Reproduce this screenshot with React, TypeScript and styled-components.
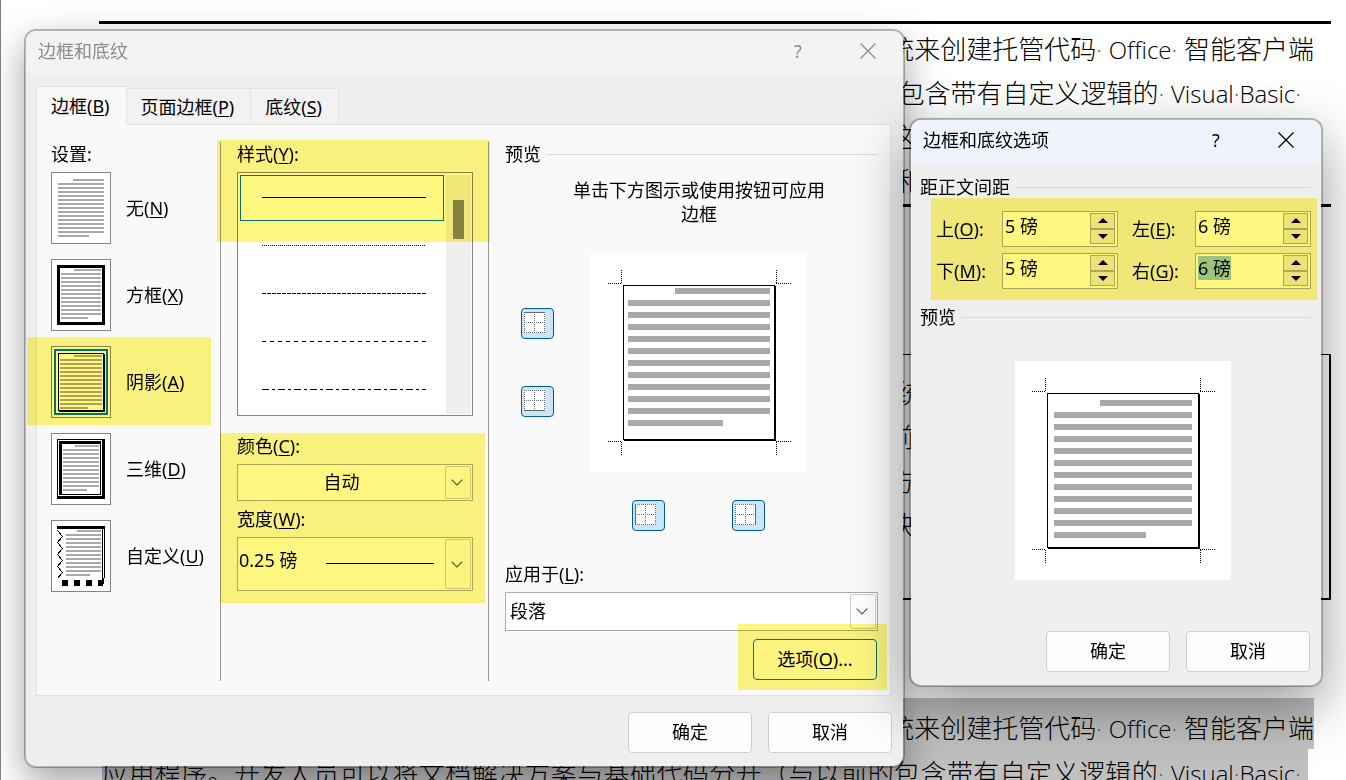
import React, { useEffect, useRef } from 'react';
import styled, { createGlobalStyle, css } from 'styled-components';

const GlobalStyle = createGlobalStyle`
  *, *::before, *::after { box-sizing: border-box; }
  body { margin: 0; background: #fff; }
  body, button, input, select {
    font-family: "Noto Sans", "Noto Sans CJK SC", sans-serif;
    font-size: 18px;
    line-height: 24px;
    font-weight: 400;
    color: #000;
  }
`;

/* ---------- document behind the dialogs ---------- */

const Desktop = styled.main`
  position: relative;
  height: 100vh;
  overflow: hidden;
  border-left: 1px solid #7f7f7f;
  padding: 21px 15px 0 98px;
`;

const docText = css`
  font-family: "Open Sans", "Noto Sans CJK SC", sans-serif;
  font-weight: 300;
  font-size: 26px;
  line-height: 44px;
  white-space: nowrap;
`;

const RuledBlock = styled.section`
  ${docText}
  border-top: 3px solid #000;
  border-bottom: 3px solid #000;
  padding: 3px 17px 1px 3px;
`;

const BoxedBlock = styled.section`
  ${docText}
  margin-top: 147px;
  border: 1px solid #000;
  border-right-width: 2px;
  border-bottom-width: 2px;
  padding: 16px 15px 51px 3px;
`;

const SelectedBlock = styled.section`
  ${docText}
  margin: 98px 17px 0 3px;
`;

const Line = styled.p<{ $inset?: number }>`
  margin: 0;
  text-align: right;
  padding-right: ${(p) => p.$inset ?? 0}px;
`;

const SelectedFirst = styled(Line)`
  background: #c0c0c0;
  padding-top: 10px;
  padding-bottom: 1px;
  line-height: 40px;
`;

const SelectedSecond = styled(Line)`
  background: #c0c0c0;
  margin-right: 6px;
  line-height: 48px;
  text-align: justify;
  text-align-last: justify;
`;

const Latin = styled.span`
  font-size: 24px;
  line-height: 1;
  font-variant-ligatures: none;
`;

const Dot = styled.span`
  font-size: 24px;
  line-height: 1;
  color: #666;
`;

/* ---------- windows ---------- */

const Window = styled.section<{ $x: number; $y: number; $w: number; $active?: boolean }>`
  position: absolute;
  left: ${(p) => p.$x}px;
  top: ${(p) => p.$y}px;
  width: ${(p) => p.$w}px;
  isolation: isolate;
  border: 2px solid rgba(0, 0, 0, 0.28);
  border-radius: 12px;
  background: #efefef;
  background-clip: padding-box;
  box-shadow: ${(p) => (p.$active ? '0 20px 56px rgba(0, 0, 0, 0.4)' : '0 14px 36px rgba(0, 0, 0, 0.36)')};
`;

const TitleBar = styled.header<{ $active?: boolean }>`
  display: flex;
  align-items: center;
  height: 43px;
  padding: 0 0 3px 12px;
  border-radius: 10px 10px 0 0;
  background: ${(p) => (p.$active ? '#eff3fb' : '#f3f3f3')};
  color: ${(p) => (p.$active ? '#000' : '#8c8c8c')};
`;

const Title = styled.h2`
  flex: 1;
  margin: 0;
  font-size: 18px;
  font-weight: 400;
`;

const CaptionButton = styled.button`
  display: flex;
  align-items: center;
  justify-content: center;
  width: 70px;
  height: 40px;
  padding: 0;
  border: 0;
  background: none;
  color: inherit;
`;

const TabBar = styled.div`
  display: flex;
  align-items: flex-end;
  margin: 12px 12px 0 10px;
`;

const Tab = styled.button<{ $active?: boolean }>`
  position: relative;
  height: ${(p) => (p.$active ? 39 : 37)}px;
  margin: 0 0 -1px;
  padding: ${(p) => (p.$active ? '0 16px 0 14px' : '0 16px 0 14px')};
  border: 1px solid #e3e3e3;
  border-left-width: ${(p) => (p.$active ? 1 : 0)}px;
  border-bottom-color: ${(p) => (p.$active ? '#f9f9f9' : '#e3e3e3')};
  background: ${(p) => (p.$active ? '#f9f9f9' : '#f2f2f2')};
`;

const Panel = styled.div`
  display: grid;
  grid-template-columns: 169px 268px 1fr;
  margin: 0 12px 0 10px;
  padding: 17px 12px 14px 14px;
  border: 1px solid #e3e3e3;
  background: #f9f9f9;
`;

const Column = styled.div<{ $ruled?: boolean }>`
  padding: 0 0 1px ${(p) => (p.$ruled ? 16 : 0)}px;
  border-left: ${(p) => (p.$ruled ? '1px solid #999' : '0')};
`;

const Footer = styled.footer<{ $gap: number }>`
  display: flex;
  justify-content: flex-end;
  gap: 16px;
  padding: ${(p) => p.$gap}px 11px 13px;
`;

const PushButton = styled.button<{ $focused?: boolean }>`
  width: 124px;
  height: 41px;
  padding: 0 0 1px;
  border: 1px solid ${(p) => (p.$focused ? '#0078d4' : '#cfcfcf')};
  border-radius: 4px;
  background: #fdfdfd;
`;

/* Marker-pen area laid over the controls it surrounds. */
const Marked = styled.div<{ $inset: string }>`
  position: relative;
  &::after {
    content: '';
    position: absolute;
    inset: ${(p) => p.$inset};
    background: #fff780;
    mix-blend-mode: multiply;
    pointer-events: none;
  }
`;

const MarkedList = styled(Marked)`
  margin-right: 15px;
`;

const MarkedFields = styled(Marked)`
  margin: 18px 15px 0 0;
`;

/* ---------- fields ---------- */

const FieldLabel = styled.label`
  display: block;
`;

const SecondLabel = styled(FieldLabel)`
  margin-top: 6px;
`;

const GroupTitle = styled.div`
  margin-bottom: 6px;
`;

const Key = styled.span`
  text-decoration: underline;
  text-decoration-thickness: 1px;
  text-underline-offset: 2px;
`;

const SettingRow = styled.label`
  display: flex;
  align-items: center;
  gap: 15px;
  height: 72px;
  white-space: nowrap;
`;

const SettingStack = styled.div`
  display: grid;
  gap: 15px;
`;

const HiddenRadio = styled.input`
  position: absolute;
  opacity: 0;
  width: 1px;
  height: 1px;
  margin: 0;
`;

const Thumb = styled.svg`
  display: block;
  flex: none;
`;

const StyleList = styled.div`
  display: flex;
  justify-content: space-between;
  height: 244px;
  margin-top: 6px;
  padding: 2px 1px 1px 2px;
  border: 1px solid #84848c;
  background: #fff;
`;

const StyleItems = styled.div`
  display: grid;
  grid-auto-rows: 46px;
  gap: 2px;
  overflow: hidden;
`;

const StyleItem = styled.label<{ $selected?: boolean }>`
  display: flex;
  align-items: center;
  justify-content: flex-end;
  width: 204px;
  padding: 0 17px 1px 0;
  border: 1px solid ${(p) => (p.$selected ? '#0078d4' : 'transparent')};
`;

const ScrollTrack = styled.div`
  width: 25px;
  padding: 25px 7px 0;
  background: #efefef;
`;

const ScrollThumb = styled.div`
  height: 39px;
  background: #858585;
`;

const Combo = styled.div<{ $h: number }>`
  position: relative;
  height: ${(p) => p.$h}px;
  margin-top: 6px;
`;

const ComboSelect = styled.select<{ $centered?: boolean; $raised?: boolean; $indent?: number }>`
  appearance: none;
  width: 100%;
  height: 100%;
  padding: 0 28px ${(p) => (p.$raised ? 8 : 1)}px ${(p) => p.$indent ?? 1}px;
  border: 1px solid #acacb0;
  border-radius: 0;
  background: #fff;
  text-align-last: ${(p) => (p.$centered ? 'center' : 'left')};
`;

const ComboArrow = styled.span`
  position: absolute;
  top: 2px;
  right: 2px;
  bottom: 2px;
  width: 26px;
  display: flex;
  align-items: center;
  justify-content: center;
  padding-right: 2px;
  border: 1px solid #cfcfcf;
  border-radius: 2px;
  background: #fdfdfd;
  pointer-events: none;
`;

const WidthSample = styled.span`
  position: absolute;
  top: 26px;
  right: 39px;
  width: 108px;
  height: 1px;
  background: #000;
  pointer-events: none;
`;

const Legend = styled.div`
  display: flex;
  align-items: center;
  gap: 5px;
  &::after {
    content: '';
    flex: 1;
    height: 1px;
    background: #dadada;
  }
`;

const PreviewGrid = styled.div`
  display: grid;
  grid-template-columns: 33px 216px;
  column-gap: 37px;
  padding: 12px 0 0 16px;
`;

const Hint = styled.p`
  grid-column: 2;
  margin: 0 -20px 27px;
  text-align: center;
`;

const SideToggles = styled.div`
  display: flex;
  flex-direction: column;
  gap: 47px;
  padding-top: 55px;
`;

const BottomToggles = styled.div`
  grid-column: 2;
  display: flex;
  justify-content: center;
  gap: 67px;
  padding: 28px 1px 31px 0;
`;

const Toggle = styled.button`
  display: flex;
  align-items: flex-start;
  width: 33px;
  height: 31px;
  padding: 3px 0 0 2px;
  border: 1px solid #005a9e;
  border-radius: 4px;
  background: #cce4f7;
`;

const OptionsRow = styled.div`
  display: flex;
  justify-content: flex-end;
  padding: 8px 1px 0 0;
`;

const OptionsBody = styled.div`
  padding: 12px 10px 0 9px;
`;

const SpacingGrid = styled(Marked)`
  display: grid;
  grid-template-columns: 66px 116px 77px 116px;
  row-gap: 6px;
  align-items: center;
  margin: 12px 0 16px 16px;
`;

const SpinLabel = styled.label<{ $second?: boolean }>`
  padding-left: ${(p) => (p.$second ? 14 : 0)}px;
`;

const Spin = styled.div`
  display: flex;
  justify-content: space-between;
  height: 36px;
  padding: 1px 2px 2px 1px;
  border: 1px solid #acacac;
  background: #fff;
`;

const SpinInput = styled.input`
  width: 84px;
  height: 24px;
  margin-top: 1px;
  padding: 0 0 0 1px;
  border: 0;
  outline: 0;
  background: none;
  &::selection { background: rgba(155, 202, 243, 0.99); color: #000; }
`;

const SpinButtons = styled.div`
  display: grid;
  grid-template-rows: 1fr 1fr;
  width: 25px;
`;

const SpinButton = styled.button`
  display: flex;
  align-items: center;
  justify-content: center;
  padding: 0;
  border: 1px solid #acacac;
  background: #ebebeb;
`;

const OptionsPreview = styled.div`
  padding: 32px 0 0 95px;
`;

/* ---------- drawings ---------- */

interface BarsProps {
  left: number;
  right: number;
  top: number;
  count: number;
  pitch: number;
  thick: number;
  firstLeft: number;
  lastRight: number;
}

function Bars({ left, right, top, count, pitch, thick, firstLeft, lastRight }: BarsProps) {
  return (
    <>
      {Array.from({ length: count }, (_, i) => {
        const x1 = i === 0 ? firstLeft : left;
        const x2 = i === count - 1 ? lastRight : right;
        return <rect key={i} x={x1} y={top + i * pitch} width={x2 - x1} height={thick} fill="#a9a9a9" />;
      })}
    </>
  );
}

type Kind = 'none' | 'box' | 'shadow' | 'threeD' | 'custom';

const thumbBars: Record<Kind, [number, number, number, number, number, number]> = {
  none: [7, 53, 7, 15, 22, 38],
  box: [10, 50, 10, 13, 23, 37],
  shadow: [9, 51, 9, 14, 23, 37],
  threeD: [12, 48, 12, 12, 24, 36],
  custom: [15, 50, 10, 12, 26, 39],
};

function SettingThumb({ kind }: { kind: Kind }) {
  const [left, right, top, count, firstLeft, lastRight] = thumbBars[kind];
  return (
    <Thumb width="60" height="72" viewBox="0 0 60 72" shapeRendering="crispEdges" aria-hidden="true">
      <rect x="0.5" y="0.5" width="59" height="71" fill="#fff" stroke="#84848c" />
      {kind === 'box' && <rect x="7.5" y="7.5" width="45" height="57" fill="none" stroke="#000" strokeWidth="3" />}
      {kind === 'shadow' && (
        <>
          <rect x="4" y="4" width="52" height="64" fill="none" stroke="#0078d4" strokeWidth="2" />
          <rect x="7.5" y="7.5" width="45" height="57" fill="none" stroke="#000" />
          <path d="M53 8h1v58H8v-1h45z" fill="#000" />
        </>
      )}
      {kind === 'threeD' && (
        <>
          <rect x="6" y="6" width="48" height="60" fill="#000" />
          <rect x="7" y="7" width="44" height="56" fill="#fff" />
          <rect x="8" y="8" width="42" height="54" fill="#000" />
          <rect x="11" y="11" width="38" height="50" fill="#fff" />
        </>
      )}
      {kind === 'custom' && (
        <>
          <rect x="6" y="6" width="48" height="3" />
          <rect x="51" y="9" width="1" height="49" />
          <rect x="53" y="9" width="1" height="49" />
          <rect x="51" y="58" width="2" height="6" />
          <path d="M6.500 10.500l5 6-5 6 5 6-5 6 5 6-5 6 5 6-5 6" fill="none" stroke="#000" />
          <path d="M11 60h6v6h-6zM23 60h6v6h-6zM35 60h6v6h-6zM47 60h5v6h-5z" />
        </>
      )}
      <Bars
        left={left}
        right={right}
        top={top}
        count={count}
        pitch={4}
        thick={2}
        firstLeft={firstLeft}
        lastRight={lastRight}
      />
    </Thumb>
  );
}

function PagePreview({ tight }: { tight?: boolean }) {
  return (
    <Thumb
      width="216"
      height="219"
      viewBox="0 0 216 219"
      shapeRendering="crispEdges"
      role="img"
      aria-label="预览"
    >
      <rect width="216" height="219" fill="#fff" />
      <path
        d="M17 30.500h13M30.500 17v13M185 30.500h15M185.500 17v13M17 188.500h13M30.500 189v13M185 188.500h15M185.500 189v13"
        stroke="#000"
        strokeDasharray="1 1"
      />
      <rect x="32.500" y="32.500" width="151" height="154" fill="none" stroke="#000" />
      <path d="M184 33h1v155H33v-1h151z" />
      <Bars
        left={tight ? 37 : 39}
        right={tight ? 179 : 177}
        top={tight ? 35 : 39}
        count={12}
        pitch={12}
        thick={6}
        firstLeft={tight ? 84 : 85}
        lastRight={tight ? 132 : 131}
      />
    </Thumb>
  );
}

type Side = 'top' | 'bottom' | 'left' | 'right';

const sidePaths: Record<Side, string> = {
  top: 'M0 .5h21',
  bottom: 'M0 20.5h21',
  left: 'M.5 0v21',
  right: 'M20.5 0v21',
};

function SideToggle({ side, label }: { side: Side; label: string }) {
  return (
    <Toggle type="button" aria-pressed="true" aria-label={label}>
      <svg width="21" height="21" viewBox="0 0 21 21" shapeRendering="crispEdges">
        <rect width="21" height="21" fill="#fff" />
        <path
          d="M0 .5h21M0 10.500h21M0 20.500h21M.5 0v21M10.500 0v21M20.500 0v21"
          stroke="#666"
          strokeDasharray="1 1"
        />
        <path d={sidePaths[side]} stroke="#666" />
      </svg>
    </Toggle>
  );
}

function CloseIcon() {
  return (
    <svg width="16" height="16" viewBox="0 0 16 16" aria-hidden="true">
      <path d="M.5 .5l15 15M15.500 .5l-15 15" stroke="currentColor" strokeWidth="1.300" />
    </svg>
  );
}

function Chevron() {
  return (
    <svg width="12" height="7" viewBox="0 0 12 7" aria-hidden="true">
      <path d="M.7 .7L6 6l5.300-5.300" fill="none" stroke="#555" strokeWidth="1.200" />
    </svg>
  );
}

function Arrow({ up }: { up?: boolean }) {
  return (
    <svg width="10" height="5" viewBox="0 0 10 5" aria-hidden="true">
      <path d={up ? 'M0 5L5 0L10 5z' : 'M0 0h10L5 5z'} />
    </svg>
  );
}

/* ---------- composed parts ---------- */

function WindowTitle({ text, active }: { text: string; active?: boolean }) {
  return (
    <TitleBar $active={active}>
      <Title>{text}</Title>
      <CaptionButton type="button" aria-label="帮助">?</CaptionButton>
      <CaptionButton type="button" aria-label="关闭">
        <CloseIcon />
      </CaptionButton>
    </TitleBar>
  );
}

function Caption({ text, hotkey, end = '' }: { text: string; hotkey: string; end?: string }) {
  return (
    <span>
      {text}(<Key>{hotkey}</Key>){end}
    </span>
  );
}

function SpinField({
  text,
  hotkey,
  value,
  second,
  selected,
}: {
  text: string;
  hotkey: string;
  value: string;
  second?: boolean;
  selected?: boolean;
}) {
  const ref = useRef<HTMLInputElement>(null);
  const id = `space-${hotkey}`;
  useEffect(() => {
    if (selected && ref.current) {
      ref.current.focus();
      ref.current.select();
    }
  }, [selected]);
  return (
    <>
      <SpinLabel htmlFor={id} $second={second}>
        <Caption text={text} hotkey={hotkey} end=":" />
      </SpinLabel>
      <Spin>
        <SpinInput id={id} ref={ref} defaultValue={value} />
        <SpinButtons>
          <SpinButton type="button" aria-label="增大"><Arrow up /></SpinButton>
          <SpinButton type="button" aria-label="减小"><Arrow /></SpinButton>
        </SpinButtons>
      </Spin>
    </>
  );
}

const settings: { kind: Kind; text: string; hotkey: string }[] = [
  { kind: 'none', text: '无', hotkey: 'N' },
  { kind: 'box', text: '方框', hotkey: 'X' },
  { kind: 'shadow', text: '阴影', hotkey: 'A' },
  { kind: 'threeD', text: '三维', hotkey: 'D' },
  { kind: 'custom', text: '自定义', hotkey: 'U' },
];

const lineStyles = [
  { name: '实线', dash: undefined },
  { name: '点线', dash: '1 1' },
  { name: '短划线', dash: '4 1' },
  { name: '虚线', dash: '4 4' },
  { name: '点划线', dash: '7 3 3 3' },
];

function OfficeTail() {
  return (
    <>
      统来创建托管代码<Dot>·</Dot> <Latin>Office</Latin>
      <Dot>·</Dot> 智能客户端
    </>
  );
}

function BasicTail() {
  return (
    <>
      包含带有自定义逻辑的<Dot>·</Dot> <Latin>Visual</Latin>
      <Dot>·</Dot>
      <Latin>Basic</Latin>
      <Dot>·</Dot>
    </>
  );
}

export default function App() {
  return (
    <Desktop>
      <GlobalStyle />
      <RuledBlock>
        <Line><OfficeTail /></Line>
        <Line $inset={13}><BasicTail /></Line>
        <Line $inset={399}>这</Line>
        <Line $inset={392}>和</Line>
      </RuledBlock>
      <BoxedBlock>
        <Line $inset={392}>统</Line>
        <Line $inset={399}>前</Line>
        <Line $inset={399}>方</Line>
        <Line $inset={399}>决</Line>
      </BoxedBlock>
      <SelectedBlock>
        <SelectedFirst><OfficeTail /></SelectedFirst>
        <SelectedSecond $inset={7}>
          应用程序。开发人员可以将文档解决方案与基础代码分开（与以前的
          <BasicTail />
        </SelectedSecond>
      </SelectedBlock>

      <Window $x={23} $y={29} $w={881} role="dialog" aria-label="边框和底纹">
        <WindowTitle text="边框和底纹" />
        <TabBar role="tablist">
          <Tab type="button" role="tab" aria-selected="true" $active>
            <Caption text="边框" hotkey="B" />
          </Tab>
          <Tab type="button" role="tab">
            <Caption text="页面边框" hotkey="P" />
          </Tab>
          <Tab type="button" role="tab">
            <Caption text="底纹" hotkey="S" />
          </Tab>
        </TabBar>
        <Panel>
          <Column>
            <GroupTitle>设置:</GroupTitle>
            <SettingStack>
              {settings.map(({ kind, text, hotkey }) => {
                const row = (
                  <SettingRow key={kind}>
                    <HiddenRadio type="radio" name="setting" defaultChecked={kind === 'shadow'} />
                    <SettingThumb kind={kind} />
                    <Caption text={text} hotkey={hotkey} />
                  </SettingRow>
                );
                return kind === 'shadow' ? (
                  <Marked key={kind} $inset="-9px 9px -7px -24px">{row}</Marked>
                ) : (
                  row
                );
              })}
            </SettingStack>
          </Column>

          <Column $ruled>
            <MarkedList $inset="-2px -17px 174px -20px">
              <Caption text="样式" hotkey="Y" end=":" />
              <StyleList>
                <StyleItems>
                  {lineStyles.map(({ name, dash }, i) => (
                    <StyleItem key={name} $selected={i === 0}>
                      <HiddenRadio type="radio" name="line-style" aria-label={name} defaultChecked={i === 0} />
                      <svg width="164" height="1" viewBox="0 0 164 1" shapeRendering="crispEdges">
                        <path d="M0 .5h164" stroke="#000" strokeDasharray={dash} />
                      </svg>
                    </StyleItem>
                  ))}
                </StyleItems>
                <ScrollTrack>
                  <ScrollThumb />
                </ScrollTrack>
              </StyleList>
            </MarkedList>
            <MarkedFields $inset="-1px -12px -12px -17px">
              <FieldLabel htmlFor="color"><Caption text="颜色" hotkey="C" end=":" /></FieldLabel>
              <Combo $h={37}>
                <ComboSelect id="color" $centered>
                  <option>自动</option>
                </ComboSelect>
                <ComboArrow><Chevron /></ComboArrow>
              </Combo>
              <SecondLabel htmlFor="width"><Caption text="宽度" hotkey="W" end=":" /></SecondLabel>
              <Combo $h={54}>
                <ComboSelect id="width" $raised>
                  <option>0.25 磅</option>
                </ComboSelect>
                <WidthSample />
                <ComboArrow><Chevron /></ComboArrow>
              </Combo>
            </MarkedFields>
          </Column>

          <Column $ruled>
            <Legend>预览</Legend>
            <PreviewGrid>
              <Hint>
                单击下方图示或使用按钮可应用
                <br />
                边框
              </Hint>
              <SideToggles>
                <SideToggle side="top" label="上框线" />
                <SideToggle side="bottom" label="下框线" />
              </SideToggles>
              <PagePreview tight />
              <BottomToggles>
                <SideToggle side="left" label="左框线" />
                <SideToggle side="right" label="右框线" />
              </BottomToggles>
            </PreviewGrid>
            <FieldLabel htmlFor="apply"><Caption text="应用于" hotkey="L" end=":" /></FieldLabel>
            <Combo $h={39}>
              <ComboSelect id="apply" $indent={4}>
                <option>段落</option>
              </ComboSelect>
              <ComboArrow><Chevron /></ComboArrow>
            </Combo>
            <OptionsRow>
              <Marked $inset="-15px -10px -10px -15px">
                <PushButton type="button" $focused>
                  <Caption text="选项" hotkey="O" end="..." />
                </PushButton>
              </Marked>
            </OptionsRow>
          </Column>
        </Panel>
        <Footer $gap={16}>
          <PushButton type="button">确定</PushButton>
          <PushButton type="button">取消</PushButton>
        </Footer>
      </Window>

      <Window $x={908} $y={118} $w={414} $active role="dialog" aria-label="边框和底纹选项">
        <WindowTitle text="边框和底纹选项" active />
        <OptionsBody>
          <Legend>距正文间距</Legend>
          <SpacingGrid $inset="-13px -6px -11px -5px">
            <SpinField text="上" hotkey="O" value="5 磅" />
            <SpinField text="左" hotkey="E" value="6 磅" second />
            <SpinField text="下" hotkey="M" value="5 磅" />
            <SpinField text="右" hotkey="G" value="6 磅" second selected />
          </SpacingGrid>
          <Legend>预览</Legend>
          <OptionsPreview>
            <PagePreview />
          </OptionsPreview>
        </OptionsBody>
        <Footer $gap={51}>
          <PushButton type="button">确定</PushButton>
          <PushButton type="button">取消</PushButton>
        </Footer>
      </Window>
    </Desktop>
  );
}
